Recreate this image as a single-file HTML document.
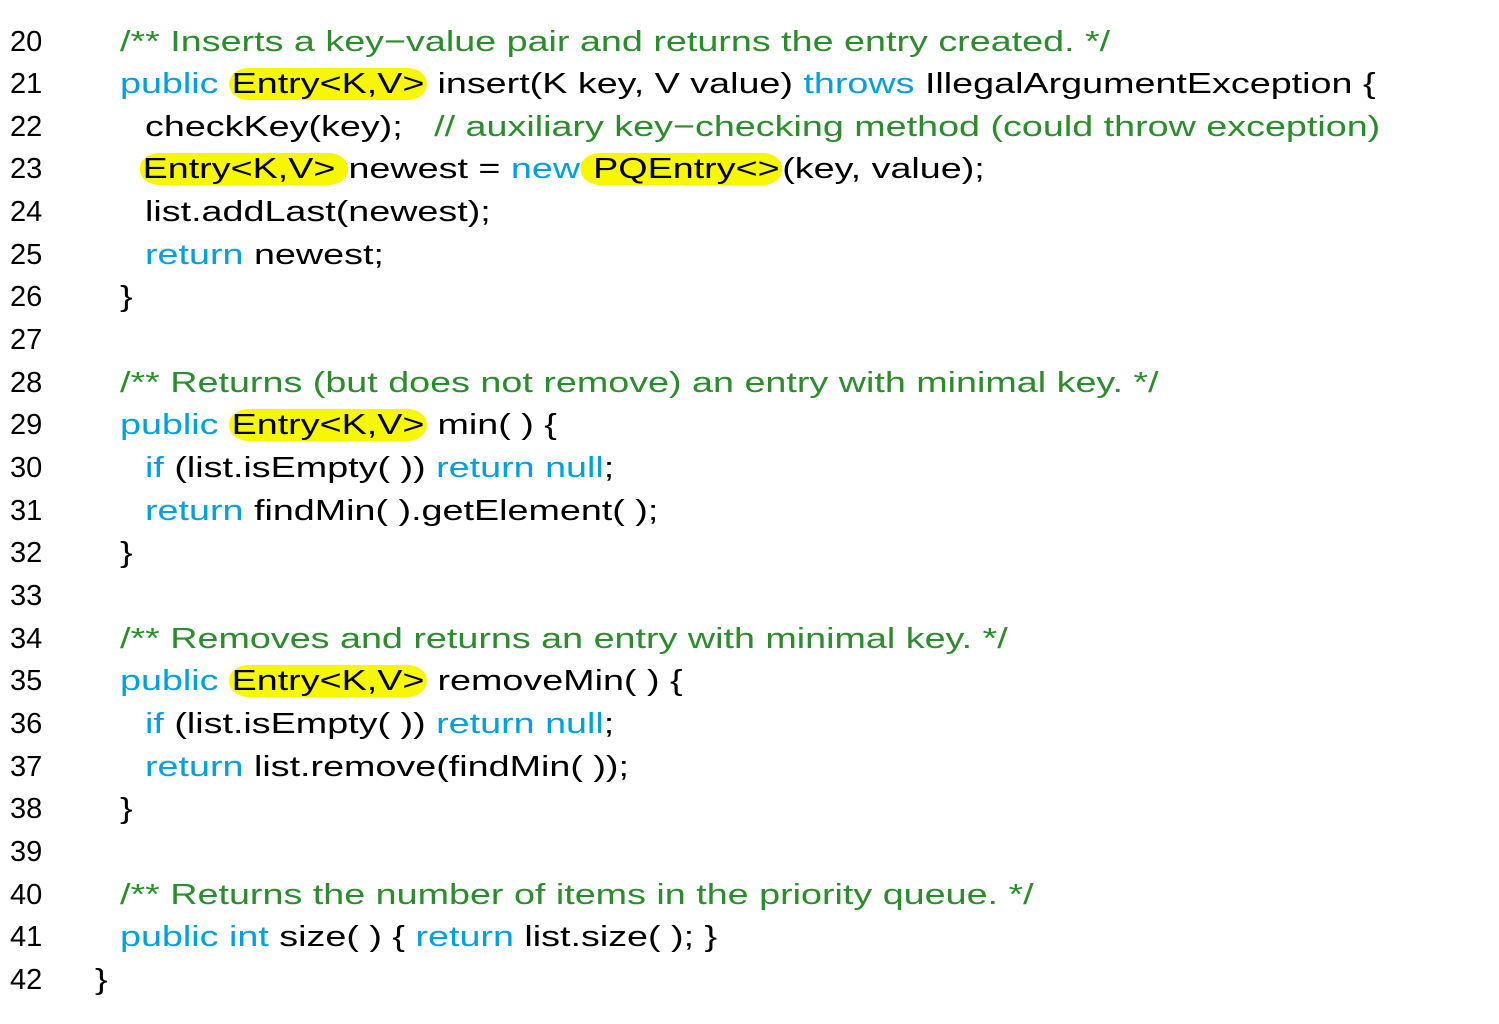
<!DOCTYPE html>
<html><head><meta charset="utf-8"><style>
body{margin:0;width:1499px;height:1024px;background:#fff;overflow:hidden;font-family:"Liberation Sans",sans-serif;font-size:29px;color:#000}
.l{position:absolute;left:0;height:42px;line-height:42px;white-space:pre}
.n{position:absolute;left:10px}
.c{position:absolute;transform:scaleX(1.3);transform-origin:0 50%}
.g{color:#2a8c2a}.b{color:#00a0e0}
.h{background:#f7f700;border-radius:15px;padding:0 2px}
</style></head><body>
<div class="l" style="top:21px"><span class="n">20</span><span class="c g" style="left:120px">/** Inserts a key−value pair and returns the entry created. */</span></div>
<div class="l" style="top:63px"><span class="n">21</span><span class="c" style="left:120px"><span class="b">public</span> <span class="h">Entry&lt;K,V&gt;</span> insert(K key, V value) <span class="b">throws</span> IllegalArgumentException {</span></div>
<div class="l" style="top:106px"><span class="n">22</span><span class="c" style="left:145px">checkKey(key);   <span class="g">// auxiliary key−checking method (could throw exception)</span></span></div>
<div class="l" style="top:148px"><span class="n">23</span><span class="c" style="left:140px"><span class="h">Entry&lt;K,V&gt; </span>newest = <span class="b">new</span><span class="h"> PQEntry&lt;&gt;</span>(key, value);</span></div>
<div class="l" style="top:191px"><span class="n">24</span><span class="c" style="left:145px">list.addLast(newest);</span></div>
<div class="l" style="top:234px"><span class="n">25</span><span class="c" style="left:145px"><span class="b">return</span> newest;</span></div>
<div class="l" style="top:276px"><span class="n">26</span><span class="c" style="left:120px">}</span></div>
<div class="l" style="top:319px"><span class="n">27</span></div>
<div class="l" style="top:362px"><span class="n">28</span><span class="c g" style="left:120px">/** Returns (but does not remove) an entry with minimal key. */</span></div>
<div class="l" style="top:404px"><span class="n">29</span><span class="c" style="left:120px"><span class="b">public</span> <span class="h">Entry&lt;K,V&gt;</span> min( ) {</span></div>
<div class="l" style="top:447px"><span class="n">30</span><span class="c" style="left:145px"><span class="b">if</span> (list.isEmpty( )) <span class="b">return null</span>;</span></div>
<div class="l" style="top:490px"><span class="n">31</span><span class="c" style="left:145px"><span class="b">return</span> findMin( ).getElement( );</span></div>
<div class="l" style="top:532px"><span class="n">32</span><span class="c" style="left:120px">}</span></div>
<div class="l" style="top:575px"><span class="n">33</span></div>
<div class="l" style="top:618px"><span class="n">34</span><span class="c g" style="left:120px">/** Removes and returns an entry with minimal key. */</span></div>
<div class="l" style="top:660px"><span class="n">35</span><span class="c" style="left:120px"><span class="b">public</span> <span class="h">Entry&lt;K,V&gt;</span> removeMin( ) {</span></div>
<div class="l" style="top:703px"><span class="n">36</span><span class="c" style="left:145px"><span class="b">if</span> (list.isEmpty( )) <span class="b">return null</span>;</span></div>
<div class="l" style="top:746px"><span class="n">37</span><span class="c" style="left:145px"><span class="b">return</span> list.remove(findMin( ));</span></div>
<div class="l" style="top:788px"><span class="n">38</span><span class="c" style="left:120px">}</span></div>
<div class="l" style="top:831px"><span class="n">39</span></div>
<div class="l" style="top:874px"><span class="n">40</span><span class="c g" style="left:120px">/** Returns the number of items in the priority queue. */</span></div>
<div class="l" style="top:916px"><span class="n">41</span><span class="c" style="left:120px"><span class="b">public int</span> size( ) { <span class="b">return</span> list.size( ); }</span></div>
<div class="l" style="top:959px"><span class="n">42</span><span class="c" style="left:95px">}</span></div>
</body></html>
